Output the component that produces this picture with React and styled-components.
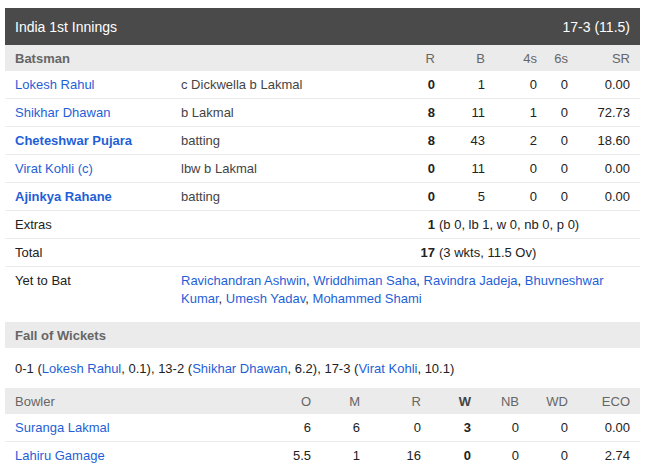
import React from "react";
import styled, { createGlobalStyle } from "styled-components";

const GlobalStyle = createGlobalStyle`
  body {
    margin: 8px 6px 0 5px;
    background: #fff;
    font-family: "Liberation Sans", Arial, sans-serif;
    font-size: 13px;
    color: #222;
  }
`;

const Card = styled.div`
  width: 635px;
`;

const InningsHeader = styled.div`
  display: flex;
  justify-content: space-between;
  align-items: center;
  height: 37px;
  padding: 0 10px;
  background: #4a4a4a;
  color: #fff;
  font-size: 14px;
`;

const BATTING_COLS = "166px 214px 40px 50px 52px 31px 62px";
const BOWLING_COLS = "246px 50px 49px 61px 50px 48px 49px 62px";

const Grid = styled.div`
  display: grid;
  grid-template-columns: ${(p) => p.$cols};
  align-items: center;
  padding: 0 10px;
`;

const HeadRow = styled(Grid)`
  height: 26px;
  background: #ebebeb;
  color: #666;
`;

const Row = styled(Grid)`
  height: 27px;
  border-bottom: 1px solid #ececec;

  &:last-child {
    border-bottom: none;
  }
`;

const TallRow = styled(Grid)`
  align-items: start;
  padding-top: 5px;
  padding-bottom: 14px;
  line-height: 18px;
  border-top: 1px solid #ececec;
`;

const Cell = styled.div`
  text-align: ${(p) => (p.$right ? "right" : "left")};
  font-weight: ${(p) => (p.$bold ? "bold" : "normal")};
  white-space: nowrap;
`;

const Muted = styled(Cell)`
  color: #444;
`;

const HeadStrong = styled(Cell)`
  color: #444;
`;

const Link = styled.a`
  color: #1f5fd6;
  text-decoration: none;
  font-weight: ${(p) => (p.$bold ? "bold" : "normal")};
`;

const Span = styled.div`
  grid-column: ${(p) => p.$from} / -1;
  padding-left: ${(p) => p.$pad || 0}px;
  white-space: ${(p) => (p.$wrap ? "normal" : "nowrap")};
`;

const SectionTitle = styled.div`
  height: 26px;
  display: flex;
  align-items: center;
  padding: 0 10px;
  background: #ebebeb;
  color: #666;
  font-weight: bold;
`;

const FowText = styled.div`
  padding: 11px 10px 10px;
  line-height: 19px;
`;

const batsmen = [
  { name: "Lokesh Rahul", out: "c Dickwella b Lakmal", r: 0, b: 1, f: 0, s: 0, sr: "0.00" },
  { name: "Shikhar Dhawan", out: "b Lakmal", r: 8, b: 11, f: 1, s: 0, sr: "72.73" },
  { name: "Cheteshwar Pujara", out: "batting", r: 8, b: 43, f: 2, s: 0, sr: "18.60", batting: true },
  { name: "Virat Kohli (c)", out: "lbw b Lakmal", r: 0, b: 11, f: 0, s: 0, sr: "0.00" },
  { name: "Ajinkya Rahane", out: "batting", r: 0, b: 5, f: 0, s: 0, sr: "0.00", batting: true },
];

const bowlers = [
  { name: "Suranga Lakmal", o: "6", m: 6, r: 0, w: 3, nb: 0, wd: 0, eco: "0.00" },
  { name: "Lahiru Gamage", o: "5.5", m: 1, r: 16, w: 0, nb: 0, wd: 0, eco: "2.74" },
];

const yetToBat = [
  "Ravichandran Ashwin",
  "Wriddhiman Saha",
  "Ravindra Jadeja",
  "Bhuvneshwar Kumar",
  "Umesh Yadav",
  "Mohammed Shami",
];

const fow = [
  { score: "0-1", name: "Lokesh Rahul", over: "0.1" },
  { score: "13-2", name: "Shikhar Dhawan", over: "6.2" },
  { score: "17-3", name: "Virat Kohli", over: "10.1" },
];

const App = () => {
  return (
    <Card>
      <GlobalStyle />
      <InningsHeader>
        <span>India 1st Innings</span>
        <span>17-3 (11.5)</span>
      </InningsHeader>

      <HeadRow $cols={BATTING_COLS}>
        <Cell $bold>Batsman</Cell>
        <Cell />
        <Cell $right>R</Cell>
        <Cell $right>B</Cell>
        <Cell $right>4s</Cell>
        <Cell $right>6s</Cell>
        <Cell $right>SR</Cell>
      </HeadRow>

      <div>
        {batsmen.map((each, key) => (
          <Row $cols={BATTING_COLS} key={key}>
            <Cell>
              <Link href="#" $bold={each.batting}>
                {each.name}
              </Link>
            </Cell>
            <Muted>{each.out}</Muted>
            <Cell $right $bold>
              {each.r}
            </Cell>
            <Cell $right>{each.b}</Cell>
            <Cell $right>{each.f}</Cell>
            <Cell $right>{each.s}</Cell>
            <Cell $right>{each.sr}</Cell>
          </Row>
        ))}
        <Row $cols={BATTING_COLS}>
          <Cell>Extras</Cell>
          <Cell />
          <Cell $right $bold>
            1
          </Cell>
          <Span $from={4} $pad={4}>
            (b 0, lb 1, w 0, nb 0, p 0)
          </Span>
        </Row>
        <Row $cols={BATTING_COLS}>
          <Cell>Total</Cell>
          <Cell />
          <Cell $right $bold>
            17
          </Cell>
          <Span $from={4} $pad={4}>
            (3 wkts, 11.5 Ov)
          </Span>
        </Row>
      </div>

      <TallRow $cols={BATTING_COLS}>
        <Cell>Yet to Bat</Cell>
        <Span $from={2} $wrap>
          {yetToBat.map((name, i) => (
            <React.Fragment key={name}>
              <Link href="#">{name}</Link>
              {i < yetToBat.length - 1 && ", "}
            </React.Fragment>
          ))}
        </Span>
      </TallRow>

      <SectionTitle>Fall of Wickets</SectionTitle>
      <FowText>
        {fow.map((each, i) => (
          <React.Fragment key={each.score}>
            {each.score} (<Link href="#">{each.name}</Link>, {each.over})
            {i < fow.length - 1 && ", "}
          </React.Fragment>
        ))}
      </FowText>

      <HeadRow $cols={BOWLING_COLS}>
        <Cell>Bowler</Cell>
        <Cell $right>O</Cell>
        <Cell $right>M</Cell>
        <Cell $right>R</Cell>
        <HeadStrong $right $bold>
          W
        </HeadStrong>
        <Cell $right>NB</Cell>
        <Cell $right>WD</Cell>
        <Cell $right>ECO</Cell>
      </HeadRow>
      <div>
        {bowlers.map((each, key) => (
          <Row $cols={BOWLING_COLS} key={key}>
            <Cell>
              <Link href="#">{each.name}</Link>
            </Cell>
            <Cell $right>{each.o}</Cell>
            <Cell $right>{each.m}</Cell>
            <Cell $right>{each.r}</Cell>
            <Cell $right $bold>
              {each.w}
            </Cell>
            <Cell $right>{each.nb}</Cell>
            <Cell $right>{each.wd}</Cell>
            <Cell $right>{each.eco}</Cell>
          </Row>
        ))}
      </div>
    </Card>
  );
};

export default App;
